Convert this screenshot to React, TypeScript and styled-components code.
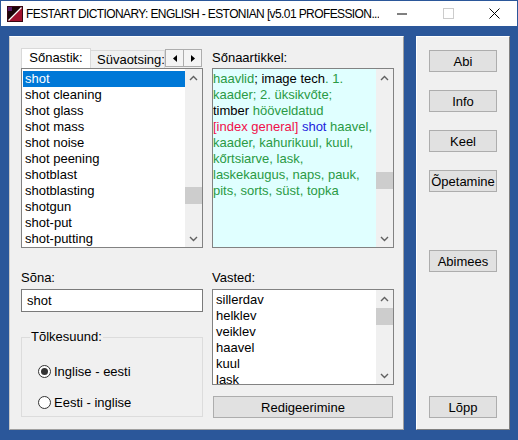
import React from "react";
import styled, { createGlobalStyle } from "styled-components";

const Global = createGlobalStyle`
  html, body { margin: 0; padding: 0; background: #2b579a; }
  body { font-family: "Liberation Sans", Arial, sans-serif; font-size: 13px; color: #000; }
  * { box-sizing: border-box; }
`;

const Window = styled.div`
  width: 518px;
  height: 440px;
  overflow: hidden;
  background: #2b579a;
  border: 1px solid #2b579a;
  display: flex;
  flex-direction: column;
`;

const TitleBar = styled.div`
  height: 25px;
  flex-shrink: 0;
  background: #fff;
  display: flex;
  align-items: center;
  padding-left: 6px;
`;

const TitleText = styled.div`
  flex: 1;
  margin-left: 3px;
  font-family: "Liberation Sans", Arial, sans-serif;
  font-size: 12px;
  letter-spacing: -0.6px;
  white-space: nowrap;
  overflow: hidden;
  color: #000;
`;

const Ctrl = styled.div`
  width: 46px;
  height: 25px;
  display: flex;
  align-items: center;
  justify-content: center;
  flex-shrink: 0;
`;

const Client = styled.div`
  flex: 1;
  display: flex;
  gap: 12px;
  padding: 10px 7px 9px 8px;
`;

const LeftPanel = styled.div`
  width: 395px;
  height: 394px;
  background: #f0f0f0;
  border-top: 1px solid #fff;
  border-left: 1px solid #c8c8c8;
  border-right: 1px solid #a0a0a0;
  border-bottom: 1px solid #a0a0a0;
  padding: 11px 0 0 11px;
  display: grid;
  grid-template-columns: 182px 182px;
  column-gap: 9px;
  align-content: start;
`;

const Column = styled.div`
  display: flex;
  flex-direction: column;
`;

const TabRow = styled.div`
  height: 20px;
  display: flex;
  align-items: flex-end;
`;

const TabActive = styled.div`
  width: 70px;
  height: 20px;
  background: #fff;
  border: 1px solid #d9d9d9;
  border-bottom: none;
  text-align: center;
  line-height: 18px;
  white-space: nowrap;
`;

const TabIdle = styled.div`
  width: 74px;
  height: 18px;
  background: #f0f0f0;
  border: 1px solid #d9d9d9;
  border-bottom: none;
  border-left: none;
  padding-left: 6px;
  line-height: 17px;
  white-space: nowrap;
  overflow: hidden;
`;

const TabArrows = styled.div`
  display: flex;
  align-self: flex-start;
  margin-top: 1px;
`;

const TabArrow = styled.div`
  width: 19px;
  height: 18px;
  background: #f4f4f4;
  border: 1px solid #adadad;
  margin-left: -1px;
  display: flex;
  align-items: center;
  justify-content: center;
  &:first-child { margin-left: 0; }
`;

const Box = styled.div<{ $h: number; $bg?: string; $mt?: number }>`
  height: ${(p) => p.$h}px;
  margin-top: ${(p) => p.$mt ?? 0}px;
  background: ${(p) => p.$bg ?? "#fff"};
  border: 1px solid #828282;
  display: flex;
  overflow: hidden;
`;

const ListContent = styled.div<{ $pl?: number }>`
  flex: 1;
  padding-top: 2px;
  padding-left: ${(p) => p.$pl ?? 0}px;
  overflow: hidden;
`;

const Item = styled.div<{ $sel?: boolean }>`
  height: 16px;
  line-height: 16px;
  margin-left: 1px;
  padding-left: 2px;
  white-space: nowrap;
  background: ${(p) => (p.$sel ? "#0078d7" : "transparent")};
  color: ${(p) => (p.$sel ? "#fff" : "#000")};
`;

const PlainItem = styled.div`
  height: 16px;
  line-height: 16px;
  white-space: nowrap;
`;

const ArticleText = styled.div`
  flex: 1;
  padding-top: 2px;
  line-height: 16px;
  white-space: nowrap;
  overflow: hidden;
`;

const C = styled.span<{ $c: "g" | "k" | "r" | "b" }>`
  color: ${(p) =>
    p.$c === "g" ? "#2a9a44" : p.$c === "r" ? "#f0104a" : p.$c === "b" ? "#2222dd" : "#000"};
`;

const SBar = styled.div`
  width: 17px;
  flex-shrink: 0;
  background: #f0f0f0;
  display: flex;
  flex-direction: column;
`;

const SArrow = styled.div`
  height: 17px;
  flex-shrink: 0;
  display: flex;
  align-items: center;
  justify-content: center;
`;

const STrack = styled.div`
  flex: 1;
  overflow: hidden;
`;

const SThumb = styled.div<{ $top: number }>`
  margin-top: ${(p) => p.$top}px;
  height: 17px;
  background: #cdcdcd;
`;

const Label = styled.div<{ $mt: number }>`
  height: 16px;
  line-height: 16px;
  margin-top: ${(p) => p.$mt}px;
  white-space: nowrap;
`;

const Input = styled.div`
  height: 23px;
  margin-top: 3px;
  background: #fff;
  border: 1px solid #7a7a7a;
  padding-left: 5px;
  line-height: 21px;
`;

const Group = styled.fieldset`
  margin: 17px 0 0 0;
  height: 88px;
  border: 1px solid #dcdcdc;
  padding: 18px 0 0 16px;
  min-width: 0;
`;

const Legend = styled.legend`
  padding: 0 1px;
  margin-left: -8px;
  line-height: 16px;
`;

const RadioRow = styled.div<{ $mt: number }>`
  display: flex;
  align-items: center;
  height: 16px;
  margin-top: ${(p) => p.$mt}px;
  gap: 3px;
`;

const RadioCircle = styled.span<{ $on?: boolean }>`
  width: 13px;
  height: 13px;
  border-radius: 50%;
  border: 1px solid #333;
  background: #fff;
  display: flex;
  align-items: center;
  justify-content: center;
  &::after {
    content: "";
    width: 7px;
    height: 7px;
    border-radius: 50%;
    background: ${(p) => (p.$on ? "#333" : "transparent")};
  }
`;

const Button = styled.div<{ $mt?: number; $auto?: boolean }>`
  height: 22px;
  background: #e1e1e1;
  border: 1px solid #adadad;
  display: flex;
  align-items: center;
  justify-content: center;
  white-space: nowrap;
  color: #000;
  margin-top: ${(p) => (p.$auto ? "auto" : `${p.$mt ?? 0}px`)};
`;

const WideButton = styled(Button)`
  margin-left: 1px;
  width: 180px;
`;

const RightPanel = styled.div`
  width: 94px;
  height: 394px;
  background: #f0f0f0;
  border-top: 1px solid #fff;
  border-left: 1px solid #fff;
  border-right: 1px solid #808080;
  border-bottom: 1px solid #808080;
  padding: 13px 0 11px 12px;
  display: flex;
  flex-direction: column;
`;

const SideButton = styled(Button)`
  width: 68px;
`;

const Up = () => (
  <svg width="9" height="6" viewBox="0 0 9 6">
    <polyline points="1,5 4.5,1.5 8,5" fill="none" stroke="#606060" strokeWidth="1.4" />
  </svg>
);
const Down = () => (
  <svg width="9" height="6" viewBox="0 0 9 6">
    <polyline points="1,1 4.5,4.5 8,1" fill="none" stroke="#606060" strokeWidth="1.4" />
  </svg>
);

const ScrollBar = ({ top }: { top: number }) => (
  <SBar>
    <SArrow>
      <Up />
    </SArrow>
    <STrack>
      <SThumb $top={top} />
    </STrack>
    <SArrow>
      <Down />
    </SArrow>
  </SBar>
);

const AppIcon = () => (
  <svg width="16" height="16" viewBox="0 0 16 16">
    <rect x="0.5" y="0.5" width="15" height="15" fill="#a0122e" stroke="#3a0612" />
    <polygon points="1,1 15,1 1,15" fill="#1a0508" />
    <rect x="1" y="1" width="4" height="4" fill="#5a1a6a" />
    <line x1="1.5" y1="14.5" x2="14.5" y2="1.5" stroke="#fff" strokeWidth="1.3" />
  </svg>
);

const words = [
  "shot",
  "shot cleaning",
  "shot glass",
  "shot mass",
  "shot noise",
  "shot peening",
  "shotblast",
  "shotblasting",
  "shotgun",
  "shot-put",
  "shot-putting",
];

const vasted = ["sillerdav", "helklev", "veiklev", "haavel", "kuul", "lask"];

export default function App() {
  return (
    <>
      <Global />
      <Window>
        <TitleBar>
          <AppIcon />
          <TitleText>FESTART DICTIONARY: ENGLISH - ESTONIAN [v5.01 PROFESSION...</TitleText>
          <Ctrl>
            <svg width="10" height="2" viewBox="0 0 10 2">
              <line x1="0" y1="1" x2="10" y2="1" stroke="#000" strokeWidth="1" />
            </svg>
          </Ctrl>
          <Ctrl>
            <svg width="11" height="11" viewBox="0 0 11 11">
              <rect x="0.5" y="0.5" width="10" height="10" fill="none" stroke="#cccccc" />
            </svg>
          </Ctrl>
          <Ctrl>
            <svg width="11" height="11" viewBox="0 0 11 11">
              <line x1="0.5" y1="0.5" x2="10.5" y2="10.5" stroke="#000" strokeWidth="1" />
              <line x1="10.5" y1="0.5" x2="0.5" y2="10.5" stroke="#000" strokeWidth="1" />
            </svg>
          </Ctrl>
        </TitleBar>
        <Client>
          <LeftPanel>
            <Column>
              <TabRow>
                <TabActive>Sőnastik:</TabActive>
                <TabIdle>Süvaotsing:</TabIdle>
                <TabArrows>
                  <TabArrow>
                    <svg width="4" height="7" viewBox="0 0 4 7">
                      <polygon points="4,0 0,3.5 4,7" fill="#000" />
                    </svg>
                  </TabArrow>
                  <TabArrow>
                    <svg width="4" height="7" viewBox="0 0 4 7">
                      <polygon points="0,0 4,3.5 0,7" fill="#000" />
                    </svg>
                  </TabArrow>
                </TabArrows>
              </TabRow>
              <Box $h={180}>
                <ListContent>
                  {words.map((w, i) => (
                    <Item key={w} $sel={i === 0}>
                      {w}
                    </Item>
                  ))}
                </ListContent>
                <ScrollBar top={101} />
              </Box>
              <Label $mt={22}>Sõna:</Label>
              <Input>shot</Input>
              <Group>
                <Legend>Tõlkesuund:</Legend>
                <RadioRow $mt={0}>
                  <RadioCircle $on />
                  <span>Inglise - eesti</span>
                </RadioRow>
                <RadioRow $mt={15}>
                  <RadioCircle />
                  <span>Eesti - inglise</span>
                </RadioRow>
              </Group>
            </Column>
            <Column>
              <Label $mt={2}>Sőnaartikkel:</Label>
              <Box $h={180} $mt={2} $bg="#e0ffff">
                <ArticleText>
                  <C $c="g">haavlid</C>
                  <C $c="k">; image tech</C>
                  <C $c="g">. 1.</C>
                  <br />
                  <C $c="g">kaader; 2. üksikvőte;</C>
                  <br />
                  <C $c="k">timber </C>
                  <C $c="g">hööveldatud</C>
                  <br />
                  <C $c="r">[index general]</C> <C $c="b">shot</C> <C $c="g">haavel,</C>
                  <br />
                  <C $c="g">kaader, kahurikuul, kuul,</C>
                  <br />
                  <C $c="g">kőrtsiarve, lask,</C>
                  <br />
                  <C $c="g">laskekaugus, naps, pauk,</C>
                  <br />
                  <C $c="g">pits, sorts, süst, topka</C>
                </ArticleText>
                <ScrollBar top={86} />
              </Box>
              <Label $mt={22}>Vasted:</Label>
              <Box $h={96} $mt={3}>
                <ListContent $pl={3}>
                  {vasted.map((w) => (
                    <PlainItem key={w}>{w}</PlainItem>
                  ))}
                </ListContent>
                <ScrollBar top={1} />
              </Box>
              <WideButton $mt={11}>Redigeerimine</WideButton>
            </Column>
          </LeftPanel>
          <RightPanel>
            <SideButton>Abi</SideButton>
            <SideButton $mt={18}>Info</SideButton>
            <SideButton $mt={18}>Keel</SideButton>
            <SideButton $mt={18}>Õpetamine</SideButton>
            <SideButton $mt={58}>Abimees</SideButton>
            <SideButton $auto>Lõpp</SideButton>
          </RightPanel>
        </Client>
      </Window>
    </>
  );
}
